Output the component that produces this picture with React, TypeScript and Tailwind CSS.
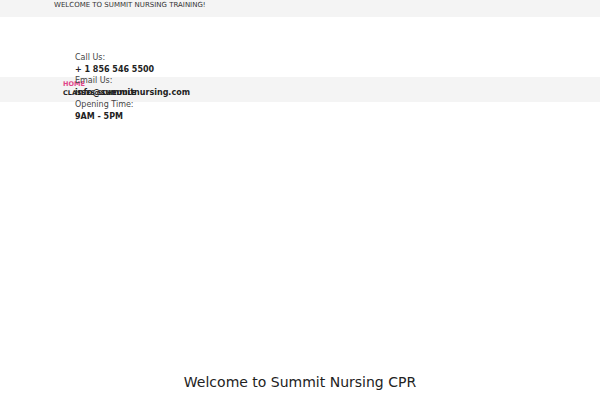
export default function App() {
  return (
    <div className="relative min-h-[400px] bg-white font-['DejaVu_Sans',sans-serif] text-[#333]">
      <div className="h-[17px] bg-[#f4f4f4]">
        <p className="pl-[54px] pt-[0.5px] text-[7px] uppercase leading-[9px] text-[#333]">
          Welcome to Summit Nursing Training!
        </p>
      </div>
      <div className="h-[60px]" />
      <nav className="h-[25px] bg-[#f4f4f4] pl-[63px] pt-[3px]">
        <ul className="text-[6.5px] font-bold uppercase leading-[9px]">
          <li className="text-[#e0458a]">Home</li>
          <li className="text-[#222]">Classes Schedule</li>
        </ul>
      </nav>
      {/* contact info overlaps the nav bar in the reference */}
      <div className="absolute left-[75px] top-[52px] text-[8px] leading-[11.7px]">
        <p className="text-[#444]">Call Us:</p>
        <p className="font-bold text-[#222]">+ 1 856 546 5500</p>
        <p className="text-[#444]">Email Us:</p>
        <p className="font-bold text-[#222]">info@summitnursing.com</p>
        <p className="text-[#444]">Opening Time:</p>
        <p className="font-bold text-[#222]">9AM - 5PM</p>
      </div>
      <div className="h-[270px]" />
      <h1 className="text-center text-[14px] text-[#222]">Welcome to Summit Nursing CPR</h1>
    </div>
  );
}
